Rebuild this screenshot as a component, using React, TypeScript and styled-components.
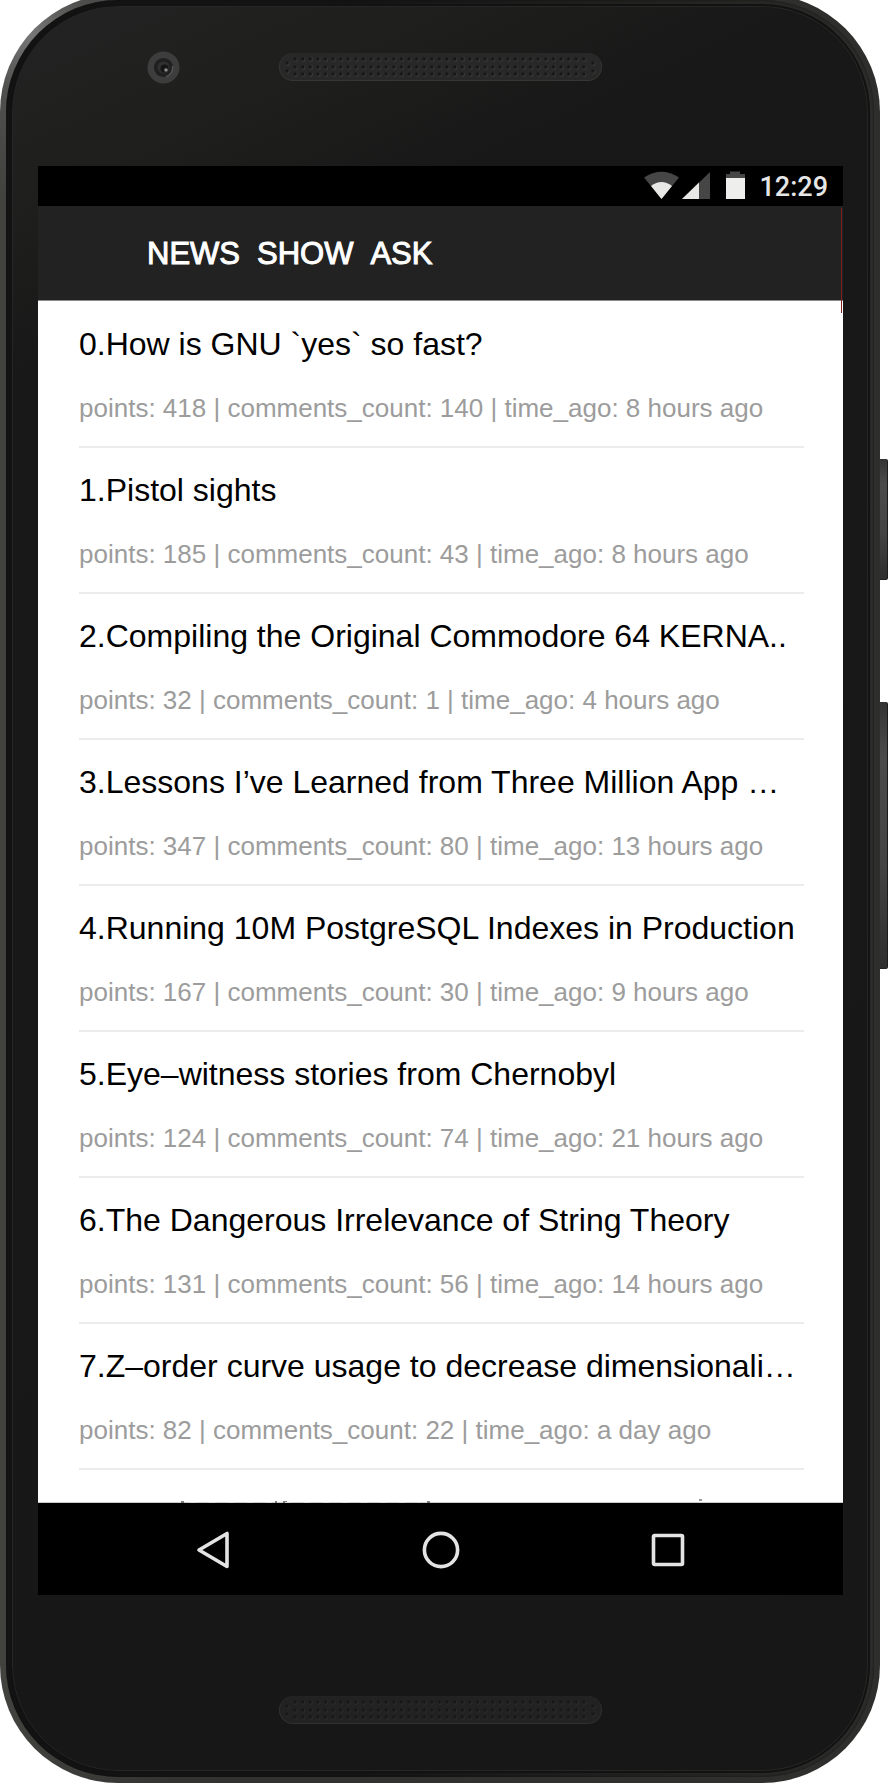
import React from "react";
import styled, { createGlobalStyle } from "styled-components";

const GlobalStyle = createGlobalStyle`
  *, *::before, *::after { box-sizing: border-box; }
  body {
    margin: 0;
    background: #fff;
    font-family: "Liberation Sans", Arial, sans-serif;
  }
`;

const Page = styled.div`
  min-height: 100vh;
  overflow: hidden;
`;

const Phone = styled.div`
  position: relative;
  margin: -6px 13px 0 0;
`;

const Rim = styled.div`
  padding: 6px;
  border-radius: 118px;
  background:
    radial-gradient(circle at 30px 40px, #767676 0, rgba(90, 90, 90, 0.6) 60px, rgba(60, 60, 58, 0) 160px),
    linear-gradient(90deg, #42423f 0, #333331 20%, #2e2e2c 100%);
`;

const Ring = styled.div`
  padding: 6px;
  border-radius: 112px;
  background: linear-gradient(90deg, #131313 0, #141414 40%, #2c2c2a 100%);
  box-shadow: inset 0 0 2px #111;
`;

const Face = styled.div`
  border: 1px solid #262626;
  border-radius: 106px;
  outline: 2px solid #121212;
  background: linear-gradient(155deg, #232323 0, #1e1e1d 10%, #181818 17%, #171717 100%);
`;

const Brow = styled.div`
  display: grid;
  grid-template-columns: 1fr auto 1fr;
  align-items: start;
  height: 159px;
  padding-top: 44px;
`;

const CameraSlot = styled.div`
  justify-self: end;
  margin-right: 99px;
  svg { display: block; }
`;

const SpeakerSlot = styled.div`
  padding-top: 2px;
  svg { display: block; }
`;

const Chin = styled.div`
  display: flex;
  justify-content: center;
  height: 175px;
  padding-top: 101px;
`;

const SideKey = styled.span<{ $top: number; $length: number }>`
  position: absolute;
  right: -8px;
  top: ${(p) => p.$top}px;
  width: 8px;
  height: ${(p) => p.$length}px;
  border-radius: 0 2px 2px 0;
  border-right: 1px solid #1c1c1c;
  border-bottom: 1px solid #222;
  background: linear-gradient(180deg, #333 0, #4b4b4b 20%, #444 60%, #2e2e2e 100%);
`;

const Screen = styled.div`
  position: relative;
  margin: 0 24px 0 25px;
  background: #fff;
`;

const StatusBar = styled.div`
  display: flex;
  align-items: center;
  justify-content: flex-end;
  height: 40px;
  padding-right: 15px;
  background: #000;
  svg { display: block; }
`;

const Clock = styled.time`
  margin-left: 14px;
  padding-top: 1px;
  color: #e6e6e6;
  font: 500 27px/32px Roboto, sans-serif;
`;

const TabBar = styled.nav`
  display: flex;
  align-items: center;
  gap: 17px;
  height: 95px;
  padding: 2px 0 0 109px;
  border-bottom: 1px solid #8a8a8a;
  background: #222;
`;

const Tab = styled.a`
  color: #fff;
  font-size: 31px;
  line-height: 36px;
  text-decoration: none;
  -webkit-text-stroke: 1px #fff;
`;

const ScrollEdge = styled.span`
  position: absolute;
  top: 42px;
  right: 1px;
  width: 1px;
  height: 105px;
  background: #7d1d1f;
`;

const List = styled.ul`
  margin: 0;
  padding: 1px 39px 0 41px;
  list-style: none;
`;

const Story = styled.li`
  padding: 24px 0 23px;
  border-bottom: 2px solid #ececec;
`;

const Title = styled.h2`
  margin: 0 0 31px;
  color: #000;
  font-size: 32px;
  font-weight: 400;
  line-height: 36px;
  white-space: nowrap;
`;

const Meta = styled.p`
  margin: 0;
  color: #9c9c9c;
  font-size: 26px;
  line-height: 30px;
  white-space: nowrap;
`;

const Peek = styled.div`
  height: 33px;
  padding-top: 28px;
  border-bottom: 1px solid #ccc;
  svg { display: block; }
`;

const NavBar = styled.div`
  display: flex;
  align-items: center;
  justify-content: center;
  gap: 127px;
  height: 92px;
  padding-top: 1px;
  background: #000;
`;

const NavButton = styled.button`
  display: grid;
  place-items: center;
  width: 100px;
  height: 60px;
  padding: 0;
  border: 0;
  background: none;
`;

type StoryData = { title: string; points: number; comments: number; ago: string };

const stories: StoryData[] = [
  { title: "How is GNU `yes` so fast?", points: 418, comments: 140, ago: "8 hours ago" },
  { title: "Pistol sights", points: 185, comments: 43, ago: "8 hours ago" },
  { title: "Compiling the Original Commodore 64 KERNA..", points: 32, comments: 1, ago: "4 hours ago" },
  { title: "Lessons I’ve Learned from Three Million App …", points: 347, comments: 80, ago: "13 hours ago" },
  { title: "Running 10M PostgreSQL Indexes in Production", points: 167, comments: 30, ago: "9 hours ago" },
  { title: "Eye–witness stories from Chernobyl", points: 124, comments: 74, ago: "21 hours ago" },
  { title: "The Dangerous Irrelevance of String Theory", points: 131, comments: 56, ago: "14 hours ago" },
  { title: "Z–order curve usage to decrease dimensionali…", points: 82, comments: 22, ago: "a day ago" },
];

const range = (n: number) => Array.from({ length: n }, (_, i) => i);

function Speaker({ dim = false }: { dim?: boolean }) {
  const holes = [
    [8, 10], [8, 18], [314, 10], [314, 18],
    ...range(39).flatMap((i) => [6, 14, 21].map((y) => [16 + i * 7.6, y])),
  ];
  return (
    <svg width="323" height="28" viewBox="0 0 323 28" aria-hidden="true">
      <rect width="323" height="28" rx="14" fill={dim ? "#303030" : "#363634"} />
      <rect x="1" width="321" height="27" rx="13" fill={dim ? "#222" : "#282828"} />
      {holes.map(([x, y]) => (
        <g key={`${x}-${y}`}>
          <circle cx={x + 0.7} cy={y + 0.7} r="2.2" fill={dim ? "#2a2a2a" : "#363634"} />
          <circle cx={x} cy={y} r="1.7" fill={dim ? "#191919" : "#181818"} />
        </g>
      ))}
    </svg>
  );
}

function Camera() {
  return (
    <svg width="33" height="33" viewBox="0 0 33 33" aria-hidden="true">
      <circle cx="16.5" cy="16.5" r="16" fill="#3d3d3d" />
      <circle cx="16.5" cy="16.5" r="9.6" fill="#202020" />
      <path d="M19 25.6A9.6 9.6 0 0 0 25.6 15" fill="none" stroke="#555" strokeWidth="1.4" />
      <circle cx="16.5" cy="16.5" r="6" fill="#303030" />
      <circle cx="17.5" cy="17.5" r="4" fill="#151515" />
      <circle cx="19" cy="19" r="1.8" fill="#8a8a8a" />
    </svg>
  );
}

function StatusIcons() {
  return (
    <svg width="101" height="30" viewBox="0 0 101 30" aria-hidden="true">
      <path d="M0 6.500Q17.500 -5 35 6.500L17.500 28Z" fill="#464646" />
      <path d="M7 15Q17.500 7 28 15L17.500 28Z" fill="#e8e8e6" />
      <path d="M66 1V28H38Z" fill="#464646" />
      <path d="M55 11.500V28H38Z" fill="#e8e8e6" />
      <path d="M82 3H86V0.500H96V3H101V8H82Z" fill="#464646" />
      <path d="M82 7H101V28H82Z" fill="#eeeeec" />
    </svg>
  );
}

export default function App() {
  return (
    <>
      <GlobalStyle />
      <Page>
        <Phone>
          <SideKey $top={465} $length={121} />
          <SideKey $top={708} $length={267} />
          <Rim>
            <Ring>
              <Face>
                <Brow>
                  <CameraSlot><Camera /></CameraSlot>
                  <SpeakerSlot><Speaker /></SpeakerSlot>
                </Brow>
                <Screen>
                  <StatusBar>
                    <StatusIcons />
                    <Clock>12:29</Clock>
                  </StatusBar>
                  <TabBar>
                    <Tab href="#news">NEWS</Tab>
                    <Tab href="#show">SHOW</Tab>
                    <Tab href="#ask">ASK</Tab>
                  </TabBar>
                  <ScrollEdge />
                  <List>
                    {stories.map((s, i) => (
                      <Story key={s.title}>
                        <Title>{i}.{s.title}</Title>
                        <Meta>
                          points: {s.points} | comments_count: {s.comments} | time_ago: {s.ago}
                        </Meta>
                      </Story>
                    ))}
                  </List>
                  <Peek>
                    <svg width="670" height="5" viewBox="0 0 670 5" aria-hidden="true">
                      <path d="M143 4h3M237 4h2M245 4h4M389 4h3" stroke="#555" strokeWidth="1.500" />
                      <path d="M152 4.500h230" stroke="#ddd" strokeWidth="1" strokeDasharray="6 13" />
                      <path d="M661 2h3" stroke="#999" strokeWidth="2" />
                    </svg>
                  </Peek>
                  <NavBar>
                    <NavButton aria-label="Back">
                      <svg width="36" height="40" viewBox="0 0 36 40">
                        <path d="M31 3.500V36.500L3 20Z" fill="none" stroke="#e4e4e4" strokeWidth="3.600" strokeLinejoin="round" />
                      </svg>
                    </NavButton>
                    <NavButton aria-label="Home">
                      <svg width="40" height="40" viewBox="0 0 40 40">
                        <circle cx="20" cy="20" r="16.600" fill="none" stroke="#e4e4e4" strokeWidth="3.600" />
                      </svg>
                    </NavButton>
                    <NavButton aria-label="Recent apps">
                      <svg width="40" height="40" viewBox="0 0 40 40">
                        <rect x="5.500" y="5.500" width="29" height="29" rx="1" fill="none" stroke="#e4e4e4" strokeWidth="3.600" />
                      </svg>
                    </NavButton>
                  </NavBar>
                </Screen>
                <Chin><Speaker dim /></Chin>
              </Face>
            </Ring>
          </Rim>
        </Phone>
      </Page>
    </>
  );
}
